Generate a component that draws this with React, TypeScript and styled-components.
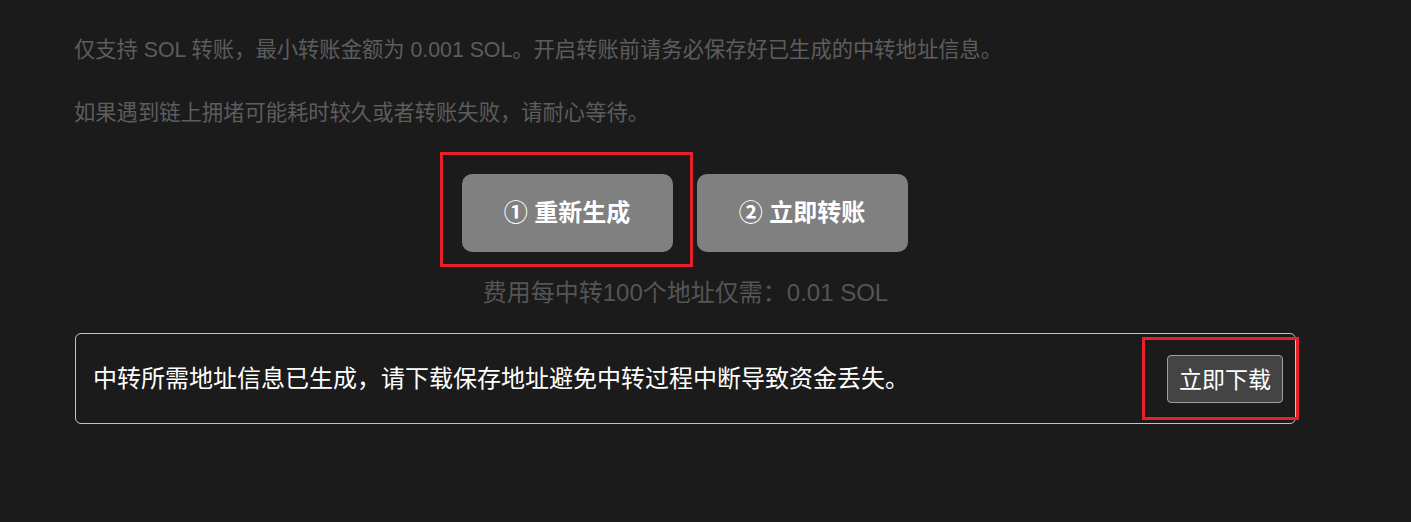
import * as React from 'react';
import styled, { createGlobalStyle } from 'styled-components';

const GlobalStyle = createGlobalStyle`
  html, body {
    margin: 0;
    padding: 0;
    background-color: #1b1b1b;
  }
  body {
    font-family: "Liberation Sans", "Noto Sans CJK SC", sans-serif;
    min-height: 522px;
  }
`;

const Page = styled.div`
  padding: 35px 0 0 75px;
  width: 1221px;
  display: flex;
  flex-direction: column;
`;

const Tip = styled.p`
  margin: 0 0 33px -1px;
  font-size: 21.3px;
  line-height: 30px;
  color: #5d5d5d;
`;

const ButtonRow = styled.div`
  display: flex;
  justify-content: center;
  gap: 24px;
  margin-top: 13px;
  padding-right: 2px;
`;

const Marked = styled.div`
  position: relative;
  display: flex;
`;

const RedMark = styled.div<{ $top: number; $right: number; $bottom: number; $left: number }>`
  position: absolute;
  top: ${(p) => -p.$top}px;
  right: ${(p) => -p.$right}px;
  bottom: ${(p) => -p.$bottom}px;
  left: ${(p) => -p.$left}px;
  border: 3px solid #e8202a;
  pointer-events: none;
`;

const StepButton = styled.button`
  width: 211px;
  height: 78px;
  padding: 0 0 5px 0;
  border: none;
  border-radius: 10px;
  background-color: #808080;
  color: #fff;
  font-family: "Liberation Sans", "Noto Sans CJK SC", sans-serif;
  font-size: 24px;
  font-weight: bold;
  cursor: pointer;
`;

const Fee = styled.div`
  margin-top: 25px;
  text-align: center;
  font-size: 24px;
  line-height: 32px;
  color: #555;
`;

const Notice = styled.div`
  margin-top: 24px;
  height: 91px;
  box-sizing: border-box;
  border: 1px solid #c4c4c4;
  border-radius: 6px;
  display: flex;
  align-items: center;
  justify-content: space-between;
  padding: 0 12px 0 17px;
`;

const NoticeText = styled.span`
  color: #fff;
  font-size: 24px;
  line-height: 32px;
`;

const DownloadButton = styled.button`
  height: 48px;
  padding: 0 11px 2px;
  background-color: #444;
  border: 1px solid #a0a0a0;
  border-radius: 4px;
  color: #fff;
  font-family: "Liberation Sans", "Noto Sans CJK SC", sans-serif;
  font-size: 23px;
  cursor: pointer;
`;

const App = () => {
  return (
    <>
      <GlobalStyle />
      <Page>
        <Tip>仅支持 SOL 转账，最小转账金额为 0.001 SOL。开启转账前请务必保存好已生成的中转地址信息。</Tip>
        <Tip>如果遇到链上拥堵可能耗时较久或者转账失败，请耐心等待。</Tip>
        <ButtonRow>
          <Marked>
            <StepButton>① 重新生成</StepButton>
            <RedMark $top={22} $right={20} $bottom={15} $left={22} />
          </Marked>
          <StepButton>② 立即转账</StepButton>
        </ButtonRow>
        <Fee>费用每中转100个地址仅需：0.01 SOL</Fee>
        <Notice>
          <NoticeText>中转所需地址信息已生成，请下载保存地址避免中转过程中断导致资金丢失。</NoticeText>
          <Marked>
            <DownloadButton>立即下载</DownloadButton>
            <RedMark $top={18} $right={16} $bottom={17} $left={25} />
          </Marked>
        </Notice>
      </Page>
    </>
  );
};

export default App;
